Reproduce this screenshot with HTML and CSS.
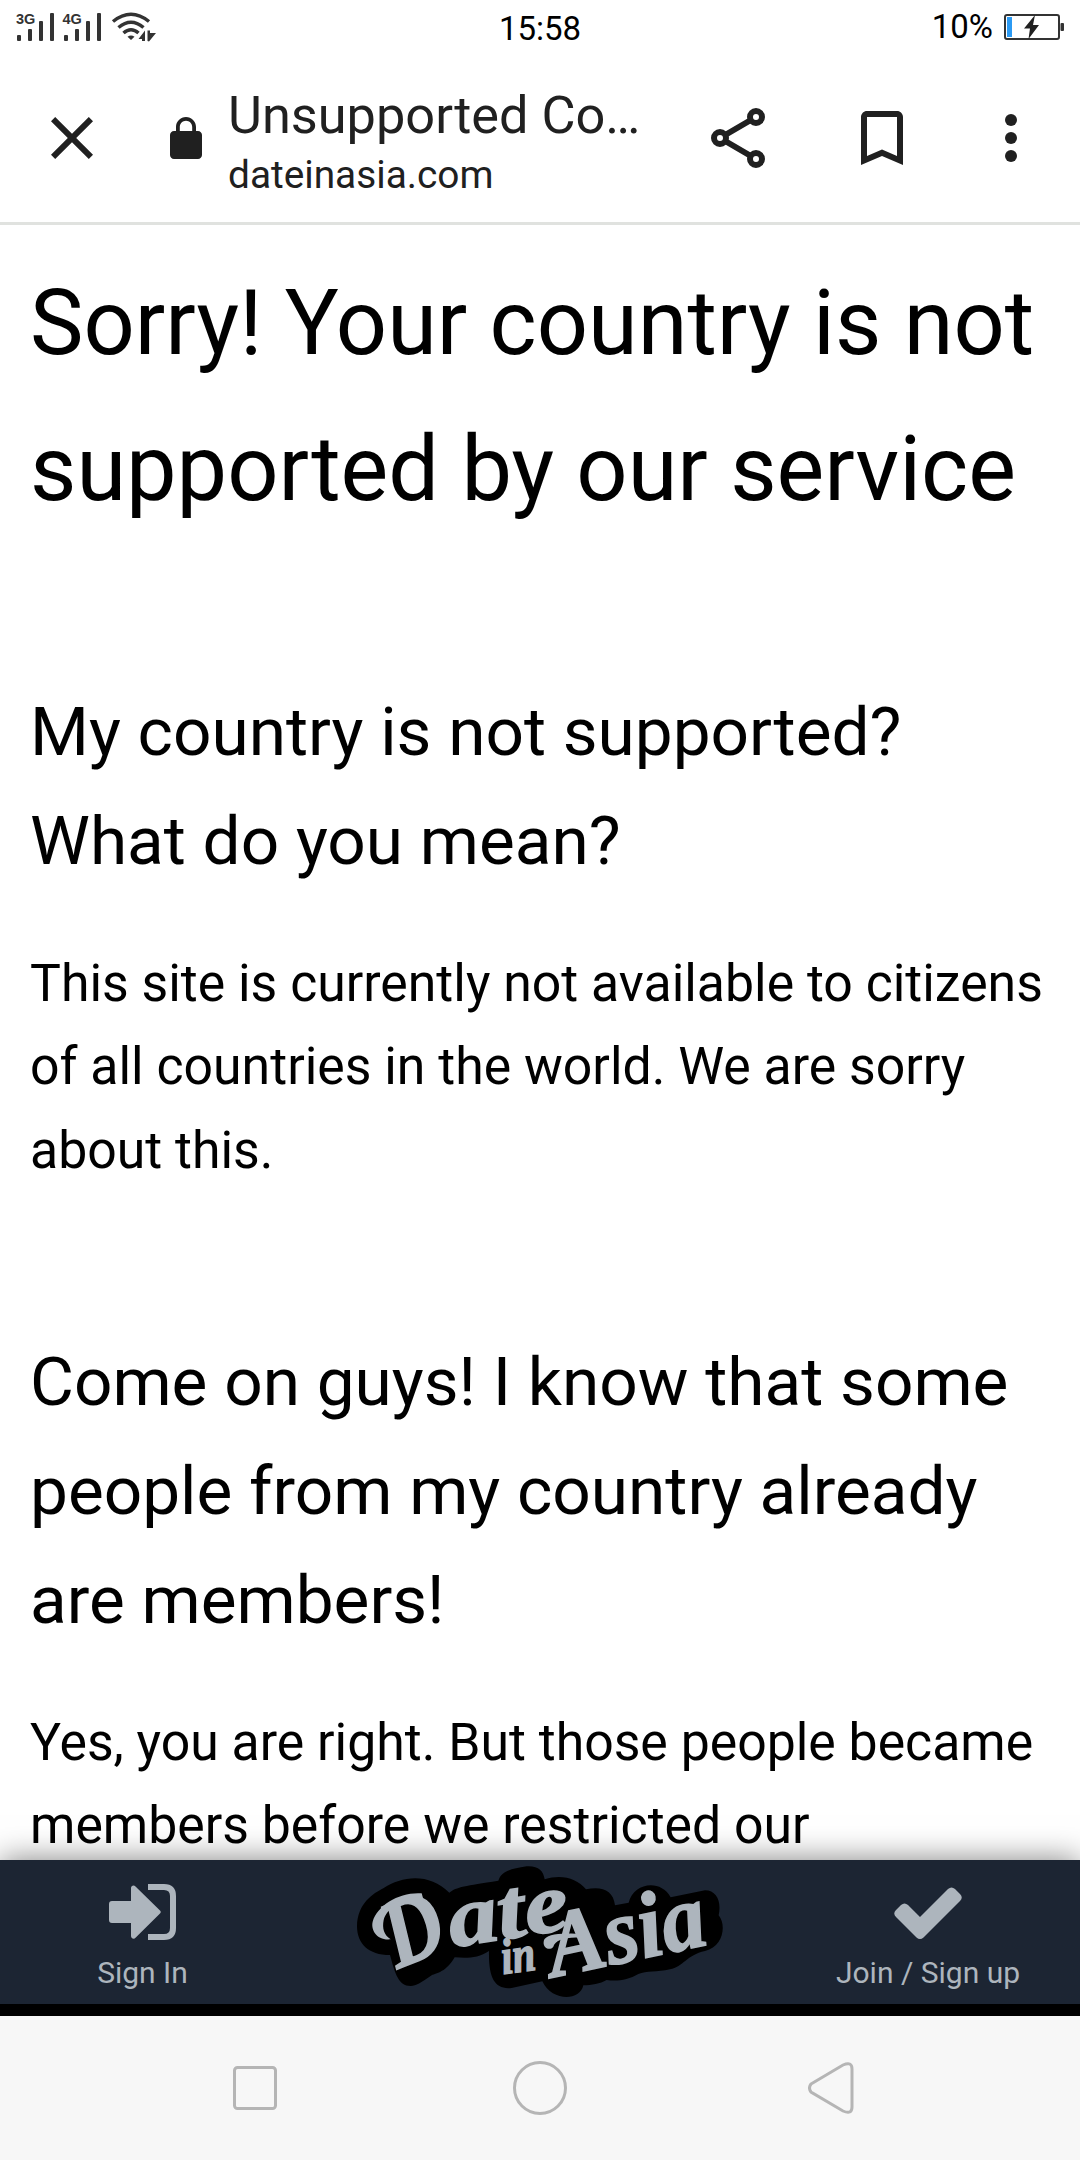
FILE: index.html
```html
<!DOCTYPE html>
<html lang="en">
<head>
    <meta charset="UTF-8">
    <meta name="viewport" content="width=device-width, initial-scale=1.0">
    <title>Unsupported Country</title>
    <link rel="stylesheet" href="styles.css">
</head>
<body>
    <!-- Phone status bar -->
    <div class="status-bar">
        <svg class="signal" width="144" height="32" viewBox="0 0 144 32">
            <text x="0" y="13.5">3G</text>
            <text x="46.5" y="13.5">4G</text>
            <g fill="#333">
                <rect x="1" y="25" width="4" height="6" rx="1"/>
                <rect x="12" y="19" width="4" height="12" rx="1"/>
                <rect x="23" y="11" width="4" height="20" rx="1"/>
                <rect x="34" y="3" width="4" height="28" rx="1"/>
                <rect x="48" y="25" width="4" height="6" rx="1"/>
                <rect x="59" y="19" width="4" height="12" rx="1"/>
                <rect x="70" y="11" width="4" height="20" rx="1"/>
                <rect x="81" y="3" width="4" height="28" rx="1"/>
                <path d="M115 30l-3.500-3.200q3.500-2.500 7 0z"/>
                <path d="M122.500 29l6.500-8.500V31h-3v-2zM131.500 31V20.500h2.500V23h6l-7 8.500z"/>
            </g>
            <g fill="none" stroke="#333" stroke-width="3.500">
                <path d="M97 11.500q18-14.500 36 0"/>
                <path d="M102.500 17.500q12.500-10.500 25 0"/>
                <path d="M107.500 23q7.500-6.500 15 0"/>
            </g>
        </svg>
        <span class="time">15:58</span>
        <div class="battery">
            <span>10%</span>
            <svg width="60" height="26" viewBox="0 0 60 26">
                <rect x="1" y="1" width="54" height="24" rx="2" fill="none" stroke="#333" stroke-width="2"/>
                <rect x="3" y="3" width="5" height="20" fill="#2b9af3"/>
                <path d="M31 1L20 14.500h6L24.500 25 35 11h-6z" fill="#202020"/>
                <rect x="56.500" y="9" width="3.500" height="8" rx="1" fill="#333"/>
            </svg>
        </div>
    </div>

    <!-- Browser toolbar -->
    <header class="toolbar">
        <svg class="close" width="42" height="42" viewBox="5 5 14 14">
            <path d="M19 6.400L17.600 5 12 10.600 6.400 5 5 6.400 10.600 12 5 17.600 6.400 19 12 13.400 17.600 19 19 17.600 13.400 12z"/>
        </svg>
        <svg class="lock" width="32" height="42" viewBox="4 1 16 21">
            <path d="M18 8h-1V6c0-2.760-2.240-5-5-5S7 3.240 7 6v2H6c-1.100 0-2 .9-2 2v10c0 1.100.9 2 2 2h12c1.100 0 2-.9 2-2V10c0-1.100-.9-2-2-2zM8.900 8V6c0-1.710 1.390-3.100 3.100-3.100s3.100 1.390 3.100 3.100v2z"/>
        </svg>
        <div class="page-info">
            <div class="page-title">Unsupported Co…</div>
            <div class="page-host">dateinasia.com</div>
        </div>
        <svg class="share" width="72" height="72" viewBox="0 0 24 24">
            <path d="M6 12L18 5M6 12l12 7" fill="none" stroke="#202020" stroke-width="2"/>
            <g fill="#fff" stroke="#202020" stroke-width="2">
                <circle cx="6" cy="12" r="2"/>
                <circle cx="18" cy="5" r="2"/>
                <circle cx="18" cy="19" r="2"/>
            </g>
        </svg>
        <svg class="bookmark" width="72" height="72" viewBox="0 0 24 24">
            <path d="M17 3H7c-1.100 0-2 .9-2 2v16l7-3 7 3V5c0-1.100-.9-2-2-2zm0 15l-5-2.180L7 18V5h10z"/>
        </svg>
        <svg class="more" width="72" height="72" viewBox="0 0 24 24">
            <circle cx="12" cy="6" r="2"/>
            <circle cx="12" cy="12" r="2"/>
            <circle cx="12" cy="18" r="2"/>
        </svg>
    </header>

    <main class="content">
        <h1>Sorry! Your country is not supported by our service</h1>
        <h2>My country is not supported? What do you mean?</h2>
        <p>This site is currently not available to citizens of all countries in the world. We are sorry about this.</p>
        <h2>Come on guys! I know that some people from my country already are members!</h2>
        <p>Yes, you are right. But those people became members before we restricted our</p>
    </main>

    <!-- Site bottom menu -->
    <footer class="site-bar">
        <a class="bar-item sign-in">
            <svg width="68" height="56" viewBox="0 0 68 56">
                <path d="M3 17h19V4c0-2.500 3-3.200 4.500-1.500l24.500 24c1 1 1 2 0 3l-24.500 24.300C25 55.500 22 54.500 22 52V39H3c-2 0-3-1-3-3V20c0-2 1-3 3-3z"/>
                <path d="M39 3h16q9 0 9 9v32q0 9-9 9H39" fill="none" stroke="#adb5bd" stroke-width="6"/>
            </svg>
            <span>Sign In</span>
        </a>
        <svg class="logo" width="366" height="132" viewBox="51 78 1098 396">
            <path fill="#000" d="M51 260C52 190 100 160 130 145C190 105 270 100 328 158C350 140 375 138 475 122C485 92 510 88 560 79C595 77 610 92 614 118C665 102 710 115 738 148C785 138 820 150 825 196L866 188C880 130 960 115 992 172L1095 151C1130 151 1145 185 1136 226C1160 255 1150 320 1095 333C1040 345 1030 380 990 388C950 397 920 392 895 402C865 420 830 425 800 420C780 432 755 435 730 436C720 485 635 485 607 424L515 444C465 450 445 415 447 333C415 355 380 355 344 352C320 395 290 400 275 406C240 430 230 437 212 438C175 438 165 400 150 345C85 345 52 310 51 260Z"/>
            <!-- swashes of the D and the A -->
            <path d="M152 298C110 302 92 270 98 245C112 195 180 155 245 160L250 178C190 172 140 205 131 240C126 265 132 285 152 298Z"/>
            <path d="M612 300C618 285 660 275 735 284L735 294C680 288 645 300 640 320C630 334 605 325 612 300Z"/>
            <g class="logo-text">
                <text transform="translate(172 388) rotate(-22)" font-size="290" textLength="175" lengthAdjust="spacingAndGlyphs">D</text>
                <text transform="translate(337 322) rotate(-9)" font-size="255" textLength="362" lengthAdjust="spacingAndGlyphs">ate</text>
                <text transform="translate(490 402) rotate(-8)" font-size="150" textLength="102" lengthAdjust="spacingAndGlyphs">in</text>
                <text transform="translate(640 412) rotate(-12)" font-size="280" textLength="480" lengthAdjust="spacingAndGlyphs">Asia</text>
            </g>
        </svg>
        <a class="bar-item join">
            <svg width="68" height="52" viewBox="0 0 68 52">
                <path d="M26 30L54 2q3.500-3 7 0l5 5q3.500 3.500 0 7L29.500 50.500q-3.500 3-7 0L2 30q-3.500-3.500 0-7l5-5q3.500-3 7 0z"/>
            </svg>
            <span>Join / Sign up</span>
        </a>
    </footer>

    <!-- Android navigation -->
    <nav class="android-nav">
        <svg class="recent" width="44" height="44" viewBox="0 0 44 44">
            <rect x="1.500" y="1.500" width="41" height="41" rx="3"/>
        </svg>
        <svg class="home" width="54" height="54" viewBox="0 0 54 54">
            <circle cx="27" cy="27" r="25.500"/>
        </svg>
        <svg class="back" width="46" height="52" viewBox="0 0 46 52">
            <path d="M3 22L35 3q9-4 9 4v38q0 8-9 4L3 30q-3-4 0-8z"/>
        </svg>
    </nav>
</body>
</html>
```
FILE: styles.css
```css
* {
    box-sizing: border-box;
}
body {
    font-family: Roboto, sans-serif;
    background-color: #fff;
    color: #000;
    margin: 0;
    height: 2160px;
    overflow: hidden;
    display: flex;
    flex-direction: column;
}
svg {
    display: block;
    flex: none;
}
.status-bar {
    height: 54px;
    flex: none;
    display: grid;
    grid-template-columns: 1fr auto 1fr;
    padding: 0 16px;
    font-size: 33px;
    line-height: 39px;
}
.signal {
    margin-top: 10px;
}
.signal text {
    font-family: "Liberation Sans", sans-serif;
    font-size: 14.5px;
    font-weight: bold;
    fill: #333;
}
.time {
    margin-top: 9px;
}
.battery {
    display: flex;
    justify-content: flex-end;
    gap: 11px;
    margin-top: 7px;
}
.battery svg {
    margin-top: 7px;
}
.toolbar {
    height: 171px;
    flex: none;
    display: flex;
    align-items: center;
    padding: 0 33px 0 51px;
    border-bottom: 3px solid #e0e2df;
    color: #202020;
    fill: #202020;
}
.lock {
    margin-left: 77px;
}
.page-info {
    width: 420px;
    margin-left: 26px;
    padding-top: 5px;
}
.page-title {
    font-size: 52.3px;
    line-height: 62px;
    white-space: nowrap;
}
.page-host {
    font-size: 38.8px;
    line-height: 46px;
    margin-top: 6px;
}
.share {
    margin-left: 54px;
}
.bookmark {
    margin-left: 72px;
}
.more {
    margin-left: 57px;
}
.content {
    height: 1635px;
    flex: none;
    overflow: hidden;
    padding: 26px 30px 0;
}
.content h1 {
    font-size: 90px;
    line-height: 146px;
    font-weight: normal;
    margin: 0 0 134px;
}
.content h2 {
    font-size: 67.5px;
    line-height: 109px;
    font-weight: normal;
    margin: 0 0 46.5px;
}
.content p {
    font-size: 51.75px;
    line-height: 83.5px;
    margin: 0 0 135px;
}
.site-bar {
    position: relative;
    height: 156px;
    flex: none;
    display: flex;
    justify-content: space-between;
    background-color: #1c2533;
    border-bottom: 12px solid #000;
    box-shadow: 0 0 30px rgba(0, 0, 0, 0.5);
    color: #adb5bd;
    fill: #adb5bd;
}
.bar-item {
    width: 304px;
    display: flex;
    flex-direction: column;
    align-items: center;
    font-size: 30px;
    line-height: 36px;
}
.sign-in {
    margin-right: 53px;
    padding: 24px 19px 0 0;
}
.sign-in span {
    margin-top: 15px;
}
.join {
    padding-top: 27px;
    margin-left: 53px;
}
.join span {
    margin-top: 16px;
}
.logo {
    margin-top: 6px;
    overflow: visible;
}
.logo-text {
    font-family: "Liberation Serif", serif;
    font-weight: bold;
    font-style: italic;
    stroke: #adb5bd;
    stroke-width: 5;
}
.android-nav {
    position: relative;
    height: 144px;
    flex: none;
    display: flex;
    align-items: center;
    padding-left: 233px;
    background-color: #f7f7f7;
    fill: none;
    stroke: #b5b5b5;
    stroke-width: 3;
}
.home {
    margin-left: 236px;
}
.back {
    margin-left: 241px;
}
```
